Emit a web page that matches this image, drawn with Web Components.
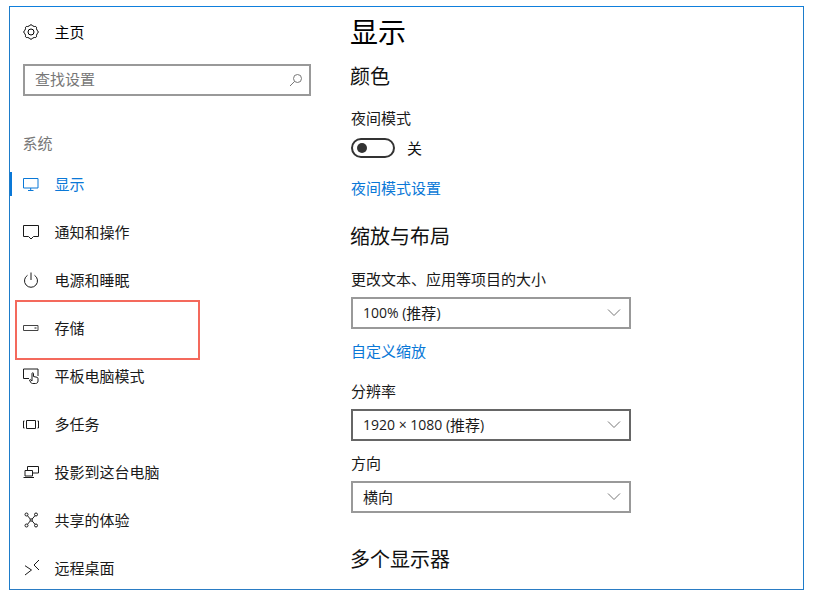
<!DOCTYPE html>
<html lang="zh">
<head>
<meta charset="utf-8">
<title>显示</title>
<style>
  html, body { margin: 0; background: #fff; }
  body { padding: 6px 9px; font-family: "Noto Sans CJK SC", "Open Sans", sans-serif; color: #111; }
</style>
</head>
<body>
<settings-window>
  <side-nav slot="nav">
    <nav-item icon="gear" home style="margin-bottom:8px">主页</nav-item>
    <search-box>查找设置</search-box>
    <nav-group>系统</nav-group>
    <nav-item icon="monitor" active>显示</nav-item>
    <nav-item icon="bubble">通知和操作</nav-item>
    <nav-item icon="power">电源和睡眠</nav-item>
    <nav-item icon="storage">存储</nav-item>
    <nav-item icon="tablet">平板电脑模式</nav-item>
    <nav-item icon="tasks">多任务</nav-item>
    <nav-item icon="project">投影到这台电脑</nav-item>
    <nav-item icon="share">共享的体验</nav-item>
    <nav-item icon="remote">远程桌面</nav-item>
  </side-nav>

  <page-title>显示</page-title>
  <section-head>颜色</section-head>
  <field-label style="margin-top:11px">夜间模式</field-label>
  <toggle-switch style="margin-top:8px">关</toggle-switch>
  <link-text style="margin-top:18px">夜间模式设置</link-text>
  <section-head style="margin-top:17px">缩放与布局</section-head>
  <field-label style="margin-top:12px">更改文本、应用等项目的大小</field-label>
  <combo-box style="margin-top:6px"><span>100% (</span><b>推荐</b><span>)</span></combo-box>
  <link-text style="margin-top:10px">自定义缩放</link-text>
  <field-label style="margin-top:16px">分辨率</field-label>
  <combo-box hover style="margin-top:6px"><span>1920 × 1080 (</span><b>推荐</b><span>)</span></combo-box>
  <field-label style="margin-top:10px">方向</field-label>
  <combo-box style="margin-top:6px"><b>横向</b></combo-box>
  <section-head style="margin-top:27px">多个显示器</section-head>
</settings-window>

<script>
// small helper, every element gets an open shadow root from a html string
function shadow(el, html) {
  el.attachShadow({ mode: "open" }).innerHTML = html;
}

function gearPath() {
  let d = "";
  const teeth = 8, cx = 8, cy = 8;
  for (let i = 0; i < teeth; i++) {
    const a1 = (i - 0.3) * Math.PI * 2 / teeth, a2 = (i + 0.3) * Math.PI * 2 / teeth;
    const p = (a, r) => (cx + Math.sin(a) * r).toFixed(2) + " " + (cy - Math.cos(a) * r).toFixed(2);
    d += (i ? "L" : "M") + p(a1, 6.4) + "A1.6 1.6 0 0 1 " + p(a2, 6.4);
  }
  return d + "Z";
}

const ICONS = {
  gear: `<path d="${gearPath()}"/><circle cx="8" cy="8" r="3"/>`,
  monitor: `<path d="M.5 2.500h14.500v9.500H.5zM7.700 12v2.500M5 14.500h5.500"/>`,
  bubble: `<path d="M.5 1.500h15v11h-5L8 15l-2.500-2.500h-5z"/>`,
  power: `<path d="M4.500 3.300a6.500 6.500 0 1 0 7 0M8 .5v7.500"/>`,
  storage: `<path d="M.5 5.500h14.500v5H.5z" stroke="#444"/><path d="M11.500 8h2"/>`,
  tablet: `<path d="M6 10.500H.5v-9.500h14.500v7"/><path d="M9.500 15.500c-1 0-1.500-.6-2-1.500l-1-2 .8-.5 1.700 1.500V5.500c0-1 1.500-1 1.500 0v3l3.500.8c.7.2 1 .6 1 1.300v2.400c0 1.500-1 2.500-2.500 2.500z"/>`,
  tasks: `<path d="M3.500 4.500h9v8h-9zM1.500 5H.5v7h1M14.500 5h1v7h-1"/>`,
  project: `<path d="M4.500 6V2.500h11V9H10"/><path d="M2 6.500h7.500V12H2zM.5 13.500h10.500"/>`,
  share: `<circle cx="3.500" cy="2.500" r="1.500"/><circle cx="13" cy="2.500" r="1.500"/><circle cx="3.500" cy="13.500" r="1.500"/><circle cx="13" cy="13.500" r="1.500"/><circle cx="8.200" cy="8" r="1.200"/><path d="M4.500 3.700l2.800 3.400M12 3.700L9.100 7.100M4.500 12.300l2.800-3.400M12 12.300L9.100 8.900"/>`,
  remote: `<path d="M2 5.700L8.500 10 2 15M16 0l-5 5 5 5"/>`
};

class SettingsWindow extends HTMLElement {
  constructor() {
    super();
    shadow(this, `
      <style>
        :host { display: flex; box-sizing: border-box; width: 795px; height: 584px; overflow: hidden;
          border: 1px solid #0f7fdc; border-bottom-color: #2a7cc4; border-left-color: #1d7cca; border-right-color: #1d7cca; }
        .nav { flex: 0 0 341px; }
        .main { flex: 1; min-width: 0; }
      </style>
      <div class="nav"><slot name="nav"></slot></div>
      <div class="main"><slot></slot></div>`);
  }
}

class SideNav extends HTMLElement {
  constructor() {
    super();
    shadow(this, `
      <style>
        :host { display: block; position: relative; padding-top: 1px; }
        .mark { position: absolute; left: 5px; top: 293px; width: 185px; height: 60px; box-sizing: border-box;
          border: 2px solid #f4695c; pointer-events: none; }
      </style>
      <slot></slot>
      <div class="mark"></div>`);
  }
}

class NavItem extends HTMLElement {
  constructor() {
    super();
    const active = this.hasAttribute("active");
    shadow(this, `
      <style>
        :host { display: flex; align-items: center; height: 48px; padding-left: 13px; position: relative;
          font-size: 15px; color: ${active ? "#0a78d7" : "#1a1a1a"}; }
        :host([home]) { color: #000; }
        svg { width: 16px; height: 16px; flex: none; margin-right: 15.500px; fill: none; stroke: currentColor; stroke-width: 1; overflow: visible; }
        .bar { display: ${active ? "block" : "none"}; position: absolute; left: 0; top: 12px; width: 2px; height: 24px; background: #0a78d7; }
        .txt { margin-top: -2px; }
      </style>
      <span class="bar"></span>
      <svg viewBox="0 0 16 16">${ICONS[this.getAttribute("icon")] || ""}</svg>
      <span class="txt"><slot></slot></span>`);
  }
}

class SearchBox extends HTMLElement {
  constructor() {
    super();
    shadow(this, `
      <style>
        :host { display: flex; align-items: center; box-sizing: border-box; width: 288px; height: 32px; margin-left: 13px;
          border: 2px solid #999; padding: 0 6px 0 10px; font-size: 15px; color: #777; }
        span { flex: 1; margin-top: -4px; }
        svg { width: 14px; height: 14px; fill: none; stroke: #777; stroke-width: 1; }
      </style>
      <span><slot></slot></span>
      <svg viewBox="0 0 14 14"><circle cx="8.500" cy="5.500" r="4"/><path d="M5.600 8.400L1 13"/></svg>`);
  }
}

class NavGroup extends HTMLElement {
  constructor() {
    super();
    shadow(this, `
      <style>
        :host { display: flex; align-items: center; height: 24px; margin: 34px 0 6px 12.500px; font-size: 15px; color: #777; }
      </style>
      <slot></slot>`);
  }
}

class PageTitle extends HTMLElement {
  constructor() {
    super();
    shadow(this, `
      <style>:host { display: flex; align-items: center; height: 50px; margin-left: -1px; padding-bottom: 2px; box-sizing: border-box; font-size: 28px; color: #000; }</style>
      <slot></slot>`);
  }
}

class SectionHead extends HTMLElement {
  constructor() {
    super();
    shadow(this, `
      <style>:host { display: flex; align-items: center; height: 38px; margin-left: -1px; padding-bottom: 2px; box-sizing: border-box; font-size: 20px; color: #111; }</style>
      <slot></slot>`);
  }
}

class FieldLabel extends HTMLElement {
  constructor() {
    super();
    shadow(this, `
      <style>:host { display: flex; align-items: center; height: 24px; padding-bottom: 2px; box-sizing: border-box; font-size: 15px; color: #1a1a1a; }</style>
      <slot></slot>`);
  }
}

class LinkText extends HTMLElement {
  constructor() {
    super();
    shadow(this, `
      <style>:host { display: flex; align-items: center; height: 24px; padding-bottom: 2px; box-sizing: border-box; font-size: 15px; color: #0a78d7; }</style>
      <slot></slot>`);
  }
}

class ToggleSwitch extends HTMLElement {
  constructor() {
    super();
    shadow(this, `
      <style>
        :host { display: flex; align-items: center; height: 20px; font-size: 15px; color: #111; }
        .track { box-sizing: border-box; width: 44px; height: 20px; border: 2px solid #333; border-radius: 10px;
          display: flex; align-items: center; padding-left: 4px; margin-right: 12px; }
        .knob { width: 10px; height: 10px; border-radius: 50%; background: #333; }
        .txt { margin-top: -2px; }
      </style>
      <span class="track"><span class="knob"></span></span>
      <span class="txt"><slot></slot></span>`);
  }
}

class ComboBox extends HTMLElement {
  constructor() {
    super();
    shadow(this, `
      <style>
        :host { display: flex; align-items: center; box-sizing: border-box; width: 280px; height: 32px;
          border: 2px solid #999; padding: 0 8px 0 10px; color: #1a1a1a; }
        :host([hover]) { border-color: #666; }
        .val { flex: 1; display: flex; align-items: center; white-space: pre; margin-top: -2px; }
        ::slotted(span) { font-family: "Open Sans", sans-serif; font-size: 14px; }
        ::slotted(b) { font-weight: 400; font-size: 15px; }
        svg { width: 14px; height: 8px; fill: none; stroke: #777; stroke-width: 1; }
      </style>
      <span class="val"><slot></slot></span>
      <svg viewBox="0 0 14 8"><path d="M1 .5l6 6 6-6"/></svg>`);
  }
}

customElements.define("settings-window", SettingsWindow);
customElements.define("side-nav", SideNav);
customElements.define("nav-item", NavItem);
customElements.define("search-box", SearchBox);
customElements.define("nav-group", NavGroup);
customElements.define("page-title", PageTitle);
customElements.define("section-head", SectionHead);
customElements.define("field-label", FieldLabel);
customElements.define("link-text", LinkText);
customElements.define("toggle-switch", ToggleSwitch);
customElements.define("combo-box", ComboBox);
</script>
</body>
</html>
